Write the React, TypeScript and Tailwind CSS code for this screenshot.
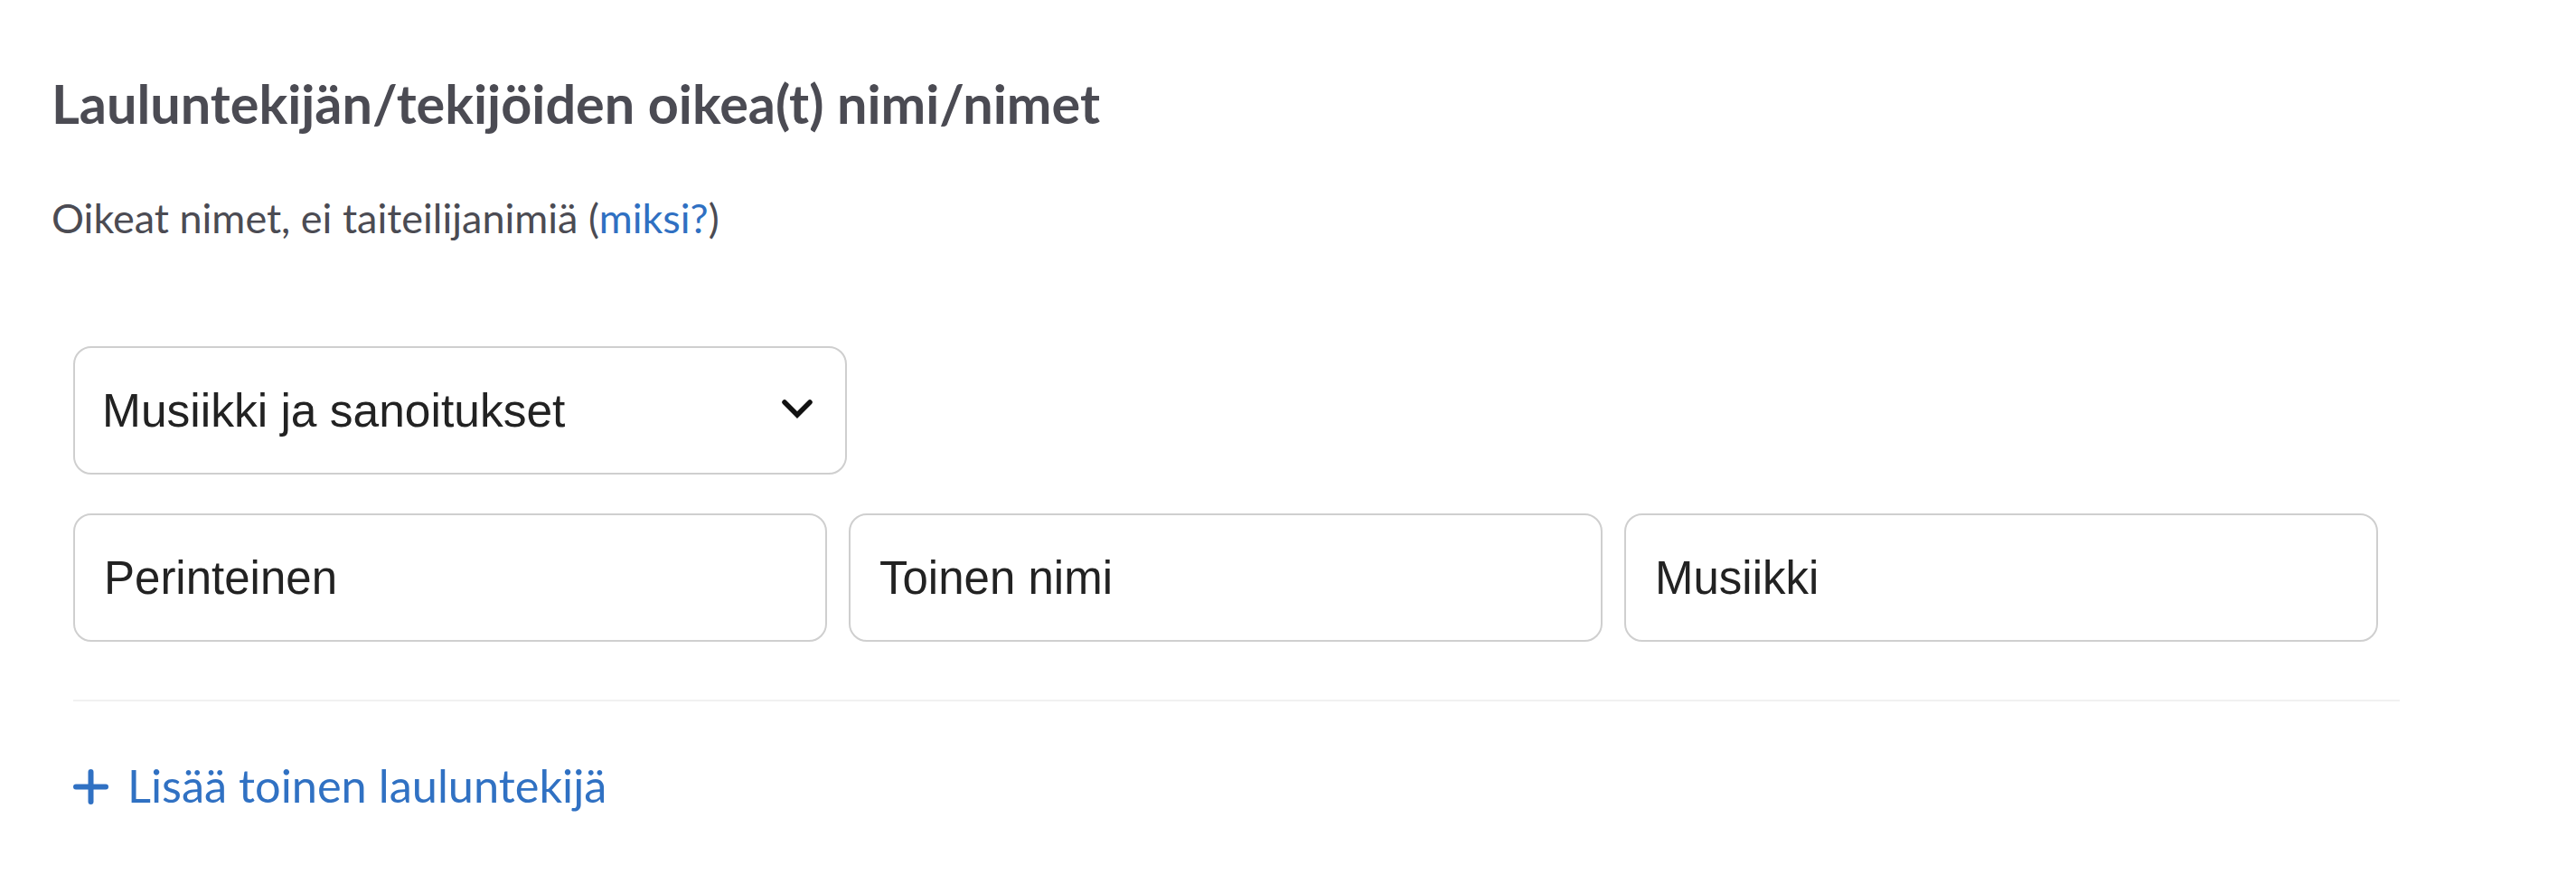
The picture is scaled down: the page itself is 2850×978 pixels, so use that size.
import React from "react";

const lato = { fontFamily: "Lato, 'Noto Sans', sans-serif" };

function Field({ value }: { value: string }) {
  return (
    <div className="flex h-[142px] w-[834px] items-center rounded-[20px] border-2 border-[#cfcfcf] bg-white pl-[32px] pt-[3px]">
      <span className="font-['Liberation_Sans',Arial,sans-serif] text-[51px] text-[#222222]">{value}</span>
    </div>
  );
}

export default function App() {
  return (
    <div className="h-[978px] w-full bg-white pl-[57px] pt-[78px]">
      <h1 className="font-['Lato',sans-serif] text-[59.4px] font-bold leading-[72px] text-[#4b4b53]">
        Lauluntekijän/tekijöiden oikea(t) nimi/nimet
      </h1>
      <p className="mt-[64px] font-['Lato',sans-serif] text-[45px] leading-[54px] text-[#4b4b53]">
        Oikeat nimet, ei taiteilijanimiä (<span className="text-[#2f70c2]">miksi?</span>)
      </p>
      <div className="ml-[24px] mt-[115px] w-[2574px]">
        <div className="flex h-[142px] w-[856px] items-center justify-between rounded-[20px] border-2 border-[#cfcfcf] bg-white pl-[30px] pr-[36px] pt-[2px]">
          <span className="font-['Liberation_Sans',Arial,sans-serif] text-[51.5px] text-[#222222]">
            Musiikki ja sanoitukset
          </span>
          <svg width="34" height="21" viewBox="0 0 34 21" className="mt-[-6px]">
            <path d="M3 3 L17 17 L31 3" fill="none" stroke="#111111" strokeWidth="5.5" strokeLinecap="round" strokeLinejoin="miter" />
          </svg>
        </div>
        <div className="mt-[43px] flex gap-[24px]">
          <Field value="Perinteinen" />
          <Field value="Toinen nimi" />
          <Field value="Musiikki" />
        </div>
        <div className="mt-[64px] h-[2px] w-full bg-[#f1f1f1]" />
        <div className="mt-[63px] flex items-center gap-[21px]" style={lato}>
          <svg width="39" height="39" viewBox="0 0 39 39" className="mt-[2px]">
            <path d="M19.5 3 V36 M3 19.5 H36" stroke="#3071c3" strokeWidth="6" strokeLinecap="round" fill="none" />
          </svg>
          <span className="font-['Lato',sans-serif] text-[50.5px] leading-[1.2] text-[#3071c3]">Lisää toinen lauluntekijä</span>
        </div>
      </div>
    </div>
  );
}
